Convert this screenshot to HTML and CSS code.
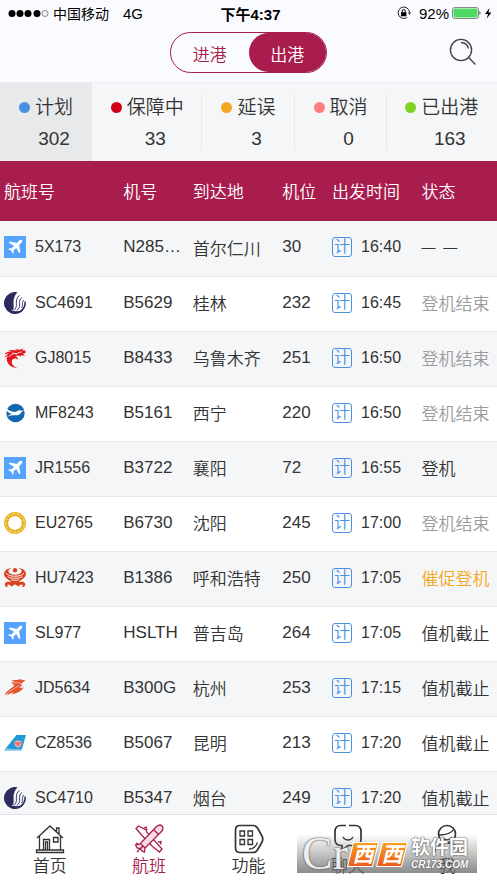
FILE: index.html
```html
<!DOCTYPE html>
<html lang="zh-CN">

<head>
  <meta charset="UTF-8">
  <meta name="viewport" content="width=device-width, initial-scale=1.0">
  <title>航班</title>
  <link rel="stylesheet" href="styles.css">
</head>

<body>
  <!-- shared icons -->
  <svg class="sprite" xmlns="http://www.w3.org/2000/svg">
    <symbol id="logo-plane" viewBox="0 0 22 22">
      <path fill="#55a3fb" d="M0 0h22v22H0z" />
      <path fill="#fff" d="M18 4c-1-.7-2.200 0-3 .8l-2.200 2.100L6 5.600 4.800 6.800l5.300 3L7.500 12.600l-2.300-.3-.9.900 3 1.500 1.500 3 .9-.9-.3-2.300 2.800-2.600 3 5.300 1.200-1.200-1.300-6.800 2.100-2.200C18 6.200 18.700 5 18 4z" />
    </symbol>
    <symbol id="logo-sc" viewBox="0 0 22 22">
      <path fill="#2d2a5e" d="M13.500.3A11 11 0 1 0 20.500 16.500C17.500 19.300 12.500 19.800 7 18.600c3.500-.8 2.600-4 2.500-7.600C9.400 7 10.500 3 13.500.3z" />
      <path fill="none" stroke="#2d2a5e" stroke-width=".9" d="M15.500 3.500c-5 3.500-2 9-3.700 12.500-.5 1.200-1.300 1.800-2.500 2.200M18 5.500c-4.300 3-1.300 7-3 10.500-.5 1-1.300 1.800-2.300 2.300M20 8c-2.800 2.500-.6 5-2.300 8" />
      <path fill="none" stroke="#2d2a5e" stroke-width="1.500" d="M21 9.500c.5 3.500-1 7.300-4.500 9.800" />
    </symbol>
    <symbol id="logo-gj" viewBox="0 0 22 22">
      <path fill="#e3141c" d="M21.500 3.500 18 3.200l1.300-2-3.300 1.600-5-.8 2.300 1.500C10 3 7 2.500 4 3.300l4.300.9C5 4.300 2 5 .5 7.200l4.500-1C3 7.300 1.300 8.700.5 11l3.800-2.900C2.700 10 2.500 12 3 14c1.200 4.500 6 6.800 11.500 7.400-4-1.400-6.800-3.500-6.800-6.500 0-2.500 2-3.400 3.500-3.400 1.300 0 2.200.5 2.800 1.400.2-2-1-3.400-3-3.900l4-.5 2 1 .5-1.500 3.500 1.200-2-2.700 2.500-.5z" />
      <path fill="none" stroke="#fff" stroke-width=".8" d="M5 10c2-3 5-4 9-3.500M8 6l5 1M14 5.500l4-.5" />
    </symbol>
    <symbol id="logo-mf" viewBox="0 0 22 22">
      <circle cx="11.500" cy="11" r="9.200" fill="#1167b1" />
      <path fill="#fff" d="M1 6c3 1.600 6 4 9.500 4 2 0 2.500-1.300 4.500-1.700 1.500-.3 2 .4 3.500.1l2.500.3c-2 .3-3.300.7-3.800 1.800-1.200 2.500-4 3-6.200 2.800-2.500-.2-5 .2-7.500 1.200 1.500-1.600 3-2.200 4.500-2.500C5 11.500 2.500 9 1 6z" />
    </symbol>
    <symbol id="logo-eu" viewBox="0 0 22 22">
      <circle cx="11" cy="11" r="9" fill="none" stroke="#e9b526" stroke-width="4" />
      <circle cx="11" cy="11" r="9.300" fill="none" stroke="#f8df87" stroke-width="1" stroke-dasharray="3 1.500" />
      <circle cx="11" cy="11" r="7.300" fill="none" stroke="#d79b17" stroke-width=".8" stroke-dasharray="2 2" />
    </symbol>
    <symbol id="logo-hu" viewBox="0 0 22 22">
      <path fill="#d9401f" d="M7.500 1C3 1.600 0 4 0 7c0 3.600 5 5.600 7.500 8.300C6 14.700 1.500 14 .8 17c-.4 2.300 1.800 3.600 4 2.700-1.300-.1-2-.8-1.500-1.700.8-1.200 3.800-.2 4 1.800l3.700-2.500 3.700 2.500c.2-2 3.200-3 4-1.800.5.900-.2 1.600-1.500 1.700 2.200.9 4.400-.4 4-2.700-.7-3-5.200-2.300-6.700-1.700C17 12.600 22 10.600 22 7c0-3-3-5.400-7.500-6C17.300 2.300 18 3.800 17.500 5c-1.700 3.500-11.300 3.500-13 0C4 3.800 4.700 2.300 7.500 1z" />
      <circle cx="11" cy="3.200" r="2.200" fill="#d9401f" />
      <path fill="none" stroke="#fff" stroke-width=".9" d="M2 6c2 4.300 16 4.300 18 0M3.500 9.300c3 2.700 12 2.700 15 0M7 12.500c2 1.200 6 1.200 8 0" />
    </symbol>
    <symbol id="logo-jd" viewBox="0 0 22 22">
      <path fill="#e5532d" d="M21.500 3.500 16 2.300l-2.500.8-6-.2 3.500 1.800-4.500.2 4 1.700-3 .1 3 1.600C7.500 11.500 3 13.500.5 18.300L5.500 15l-3 3.500 7.500-3.700-2.500 2.700c5-1 10.500-3.500 12-7l-4.500.5 3.500-3-2-.5 2-2z" />
      <path fill="none" stroke="#fff" stroke-width=".5" d="M5 14.500 16 8M10 5.500l7 .5" />
    </symbol>
    <symbol id="logo-cz" viewBox="0 0 22 22">
      <path fill="#1a9bd7" d="M12.500 3H22l-4.500 15.500H0z" />
      <path fill="#fff" d="m0 18.500 2-2.200c6 1 11 .7 16 .5l-.5 1.700z" opacity=".4" />
      <path fill="#f0a9a5" d="M10 9.500c2-1.500 6-1.500 8 0l-1 4.500-3 2-3-2z" />
      <path fill="none" stroke="#d2444a" d="M11 10.500c2 1 4 1 6 0M12.500 13h3" />
    </symbol>
  </svg>

  <div class="app">
    <div class="status_bar">
      <div class="carrier">
        <svg width="41" height="9" viewBox="0 0 41 9">
          <circle cx="4" cy="4.500" r="3.500" />
          <circle cx="12" cy="4.500" r="3.500" />
          <circle cx="20" cy="4.500" r="3.500" />
          <circle cx="29" cy="4.500" r="3.500" />
          <circle cx="37" cy="4.500" r="3" fill="none" stroke="#555" stroke-width=".7" />
        </svg>
        <span class="carrier_name">中国移动</span>
        <span>4G</span>
      </div>
      <div class="clock">下午4:37</div>
      <div class="battery">
        <svg class="lock" width="14" height="14" viewBox="0 0 14 14">
          <path fill="none" stroke="#222" d="M12.500 6A5.700 5.700 0 1 0 10 11.500" />
          <path d="M11 6.500h3l-1.500 2.200zM4 6.300h5.400v3.900H4z" />
          <path fill="none" stroke="#000" d="M5.200 6.500V5a1.500 1.500 0 0 1 3 0v1.500" />
        </svg>
        <span>92%</span>
        <svg width="41" height="14" viewBox="0 0 41 14">
          <rect x=".5" y="1.500" width="26" height="11" rx="2" fill="#fff" stroke="#888" />
          <rect x="1.500" y="2.500" width="24" height="9" rx="1" fill="#4cd964" />
          <path fill="#333" d="M27.500 5q2 2 0 4z" />
          <path d="m37.500 2-4.500 6h3l-1.300 4.500L39.500 6.500h-3z" />
        </svg>
      </div>
    </div>

    <header class="top_bar">
      <div class="segment">
        <button type="button">进港</button>
        <button type="button" class="active">出港</button>
      </div>
      <button type="button" class="search" aria-label="搜索">
        <svg width="28" height="28" viewBox="0 0 28 28" fill="none" stroke="#444" stroke-width="1.400">
          <circle cx="12" cy="12" r="10.600" />
          <path d="m19.600 19.600 6.800 6.800M12 4.500c4 .2 6.800 2.800 7.300 6" />
        </svg>
      </button>
    </header>

    <div class="stats">
      <button type="button" class="stat active"><i class="dot blue"></i><span>计划</span><span class="num">302</span></button>
      <button type="button" class="stat"><i class="dot red"></i><span>保障中</span><span class="num">33</span></button>
      <button type="button" class="stat"><i class="dot orange"></i><span>延误</span><span class="num">3</span></button>
      <button type="button" class="stat"><i class="dot pink"></i><span>取消</span><span class="num">0</span></button>
      <button type="button" class="stat"><i class="dot green"></i><span>已出港</span><span class="num">163</span></button>
    </div>

    <main class="flight_list">
      <table>
        <colgroup>
          <col class="col_flight">
          <col class="col_reg">
          <col class="col_dest">
          <col class="col_stand">
          <col class="col_time">
          <col class="col_state">
        </colgroup>
        <thead>
          <tr>
            <th>航班号</th>
            <th>机号</th>
            <th>到达地</th>
            <th>机位</th>
            <th>出发时间</th>
            <th>状态</th>
          </tr>
        </thead>
        <tbody>
          <tr>
            <td><div class="cell"><svg class="logo"><use href="#logo-plane" /></svg>5X173</div></td>
            <td>N285…</td>
            <td>首尔仁川</td>
            <td>30</td>
            <td><div class="cell"><span class="plan">计</span>16:40</div></td>
            <td><span class="dash">—&nbsp; —</span></td>
          </tr>
          <tr>
            <td><div class="cell"><svg class="logo"><use href="#logo-sc" /></svg>SC4691</div></td>
            <td>B5629</td>
            <td>桂林</td>
            <td>232</td>
            <td><div class="cell"><span class="plan">计</span>16:45</div></td>
            <td class="done">登机结束</td>
          </tr>
          <tr>
            <td><div class="cell"><svg class="logo"><use href="#logo-gj" /></svg>GJ8015</div></td>
            <td>B8433</td>
            <td>乌鲁木齐</td>
            <td>251</td>
            <td><div class="cell"><span class="plan">计</span>16:50</div></td>
            <td class="done">登机结束</td>
          </tr>
          <tr>
            <td><div class="cell"><svg class="logo"><use href="#logo-mf" /></svg>MF8243</div></td>
            <td>B5161</td>
            <td>西宁</td>
            <td>220</td>
            <td><div class="cell"><span class="plan">计</span>16:50</div></td>
            <td class="done">登机结束</td>
          </tr>
          <tr>
            <td><div class="cell"><svg class="logo"><use href="#logo-plane" /></svg>JR1556</div></td>
            <td>B3722</td>
            <td>襄阳</td>
            <td>72</td>
            <td><div class="cell"><span class="plan">计</span>16:55</div></td>
            <td>登机</td>
          </tr>
          <tr>
            <td><div class="cell"><svg class="logo"><use href="#logo-eu" /></svg>EU2765</div></td>
            <td>B6730</td>
            <td>沈阳</td>
            <td>245</td>
            <td><div class="cell"><span class="plan">计</span>17:00</div></td>
            <td class="done">登机结束</td>
          </tr>
          <tr>
            <td><div class="cell"><svg class="logo"><use href="#logo-hu" /></svg>HU7423</div></td>
            <td>B1386</td>
            <td>呼和浩特</td>
            <td>250</td>
            <td><div class="cell"><span class="plan">计</span>17:05</div></td>
            <td class="urgent">催促登机</td>
          </tr>
          <tr>
            <td><div class="cell"><svg class="logo"><use href="#logo-plane" /></svg>SL977</div></td>
            <td>HSLTH</td>
            <td>普吉岛</td>
            <td>264</td>
            <td><div class="cell"><span class="plan">计</span>17:05</div></td>
            <td>值机截止</td>
          </tr>
          <tr>
            <td><div class="cell"><svg class="logo"><use href="#logo-jd" /></svg>JD5634</div></td>
            <td>B300G</td>
            <td>杭州</td>
            <td>253</td>
            <td><div class="cell"><span class="plan">计</span>17:15</div></td>
            <td>值机截止</td>
          </tr>
          <tr>
            <td><div class="cell"><svg class="logo"><use href="#logo-cz" /></svg>CZ8536</div></td>
            <td>B5067</td>
            <td>昆明</td>
            <td>213</td>
            <td><div class="cell"><span class="plan">计</span>17:20</div></td>
            <td>值机截止</td>
          </tr>
          <tr>
            <td><div class="cell"><svg class="logo"><use href="#logo-sc" /></svg>SC4710</div></td>
            <td>B5347</td>
            <td>烟台</td>
            <td>249</td>
            <td><div class="cell"><span class="plan">计</span>17:20</div></td>
            <td>值机截止</td>
          </tr>
        </tbody>
      </table>
    </main>

    <nav class="tab_bar">
      <a href="#home">
        <svg viewBox="0 0 30 30">
          <path d="M2 14 15 2l13 12M4.500 12v14M25.500 12v14M1.500 26h27v2.500h-27zM8.500 26V15.500h6V26M10.500 26v-8h2v8M18.500 13.500h4.500v4.500h-4.500zM21.500 7.500V4h2.500v6" />
        </svg>
        首页
      </a>
      <a href="#flights" class="active">
        <svg viewBox="0 0 30 30">
          <path fill="#fff" d="M2 4.500 4.500 2 12 6l1 2.500 15 16.500-2.500 3-7-5.500L8.500 12z" />
          <path d="m10 4 2-1 1 3M24 18l3-.5-.5 3" />
          <path fill="#f9dbe5" d="M21.500 3.500c2.500-2.500 5-3 6.500-1.500s1 4-1.500 6.500L11 24l-.5 4L8 27l-1.500-2.500L3 24l-1.500-3L6 20z" />
          <path d="m20 6 4.500 4.500M7 20l4 4M3 28l6-6M4 20l-2-1" />
        </svg>
        航班
      </a>
      <a href="#features">
        <svg viewBox="0 0 30 30">
          <path stroke-width="1.700" d="M6 1.500h13.500c2 0 3 1 4 2.500l4.500 8q1.500 3 0 6l-4.500 8c-1 1.500-2 2.500-4 2.500H6c-3 0-4.500-1.500-4.500-4.500V6c0-3 1.500-4.500 4.500-4.500z" />
          <path d="M6 7h4.500v5H6zM14 7h4.500v5H14zM6 15.500h4.500v5H6zM14 15.500h4.500v5H14zM15 25c5 0 7-2.500 8.500-6.500" />
        </svg>
        功能
      </a>
      <a href="#chat">
        <svg viewBox="0 0 30 30">
          <path stroke-width="1.700" d="M8 1.500h5M16 1.500h6c4 0 6 2 6 6v8c0 4-2 6-6 6h-7l-6 5v-5H8c-4 0-6-2-6-6v-8c0-4 2-6 6-6" />
          <path d="M10 13c2 4 8 4 10 0" />
        </svg>
        聊天
      </a>
      <a href="#me">
        <svg viewBox="0 0 30 30">
          <circle cx="15" cy="10" r="8.500" stroke-width="1.700" />
          <path d="M7 11c7 0 12-1 15-6M11 14c3 3 7 2 9-1M3 28c1-6 5-9 12-9s11 3 12 9" />
        </svg>
        我
      </a>
      <div class="watermark">
        <span class="mark_cr">Cr</span>
        <span class="mark_xi"><i>西</i><i>西</i></span>
        <span class="mark_site"><b>软件园</b><em>CR173.COM</em></span>
      </div>
    </nav>
  </div>
</body>

</html>
```
FILE: styles.css
```css
* {
  box-sizing: border-box;
}

body {
  margin: 0;
  background: #fff;
  color: #333;
  font-family: "Liberation Sans", "Noto Sans CJK SC", sans-serif;
  font-size: 17px;
  font-weight: 350;
}

button {
  margin: 0;
  padding: 0;
  border: 0;
  background: none;
  color: inherit;
  font: inherit;
  cursor: pointer;
}

.sprite {
  display: none;
}

.app {
  display: flex;
  flex-direction: column;
  height: 100vh;
  padding-bottom: 10px;
}

/* phone status bar */
.status_bar {
  display: grid;
  grid-template-columns: 1fr auto 1fr;
  align-items: center;
  height: 26px;
  padding: 0 4px 0 8px;
  background: #fafbfe;
  color: #000;
  font-size: 15px;
  font-weight: 400;
}

.carrier,
.battery {
  display: flex;
  align-items: center;
  gap: 4px;
}

.carrier_name {
  margin-right: 10px;
  font-size: 14px;
}

.clock {
  font-weight: bold;
}

.battery {
  justify-content: flex-end;
  gap: 3px;
}

.lock {
  margin-right: 5px;
}

/* top bar */
.top_bar {
  display: grid;
  grid-template-columns: 1fr 157px 1fr;
  align-items: center;
  height: 57px;
  padding: 0 20px 4px;
  border-bottom: 1px solid #eceef0;
  background: #fafbfe;
}

.segment {
  grid-column: 2;
  display: flex;
  height: 41px;
  border: 1px solid #a81d4e;
  border-radius: 21px;
}

.segment button {
  flex: 1;
  padding-top: 2px;
  border-radius: 20px;
  color: #a81d4e;
}

.segment button.active {
  background: #a81d4e;
  color: #fff;
}

.search {
  justify-self: end;
  height: 28px;
}

.search svg {
  display: block;
}

/* counters */
.stats {
  display: grid;
  grid-template-columns: 5fr 6fr 5fr 5fr 6fr;
  height: 78px;
  background: #f5f6f8;
}

.stat {
  display: grid;
  grid-template-columns: 12px auto;
  grid-template-rows: 31px 31px;
  column-gap: 4px;
  align-content: center;
  align-items: center;
  justify-content: center;
  padding-top: 1px;
  background: linear-gradient(#e6e8ea, #e6e8ea) right center / 1px 55px no-repeat;
  font-size: 19px;
  line-height: 31px;
}

.stat:last-child {
  background: none;
}

.stat.active {
  background: #e8e9eb;
}

.stat .num {
  grid-column: 2;
}

.dot {
  width: 11px;
  height: 11px;
  border-radius: 50%;
}

.dot.blue {
  background: #4a90e2;
}

.dot.red {
  background: #d0021b;
}

.dot.orange {
  background: #f5a623;
}

.dot.pink {
  background: #ff7e80;
}

.dot.green {
  background: #7ed321;
}

/* flights */
.flight_list {
  flex: 1;
  min-height: 0;
  overflow: hidden;
}

table {
  width: 100%;
  border-collapse: collapse;
  table-layout: fixed;
}

.col_flight {
  width: 24%;
}

.col_reg {
  width: 14%;
}

.col_dest,
.col_time {
  width: 18%;
}

.col_stand {
  width: 10%;
}

.col_state {
  width: 16%;
}

th,
td {
  padding: 0 0 2px 4px;
  text-align: left;
  white-space: nowrap;
}

th {
  height: 60px;
  background: #a81d4e;
  color: #fff;
  font-weight: 350;
}

td {
  height: 55px;
  border-bottom: 1px solid #e8e9eb;
}

tbody tr:nth-child(odd) {
  background: #f5f6f8;
}

.cell {
  display: flex;
  align-items: center;
  gap: 9px;
  font-size: 16px;
}

.logo {
  width: 22px;
  height: 22px;
}

.plan {
  width: 20px;
  height: 20px;
  border: 1px solid #4a90e2;
  border-radius: 3px;
  color: #4a90e2;
  line-height: 17px;
  text-align: center;
}

.done {
  color: #9b9b9b;
}

.urgent {
  color: #f5a623;
}

.dash {
  font-size: 14px;
}

/* bottom tabs */
.tab_bar {
  position: relative;
  display: flex;
  height: 59px;
  border-top: 1px solid #e1e4e7;
  background: #fff;
}

.tab_bar a {
  flex: 1;
  display: flex;
  flex-direction: column;
  align-items: center;
  padding-top: 9px;
  color: #333;
  line-height: 25px;
  text-decoration: none;
}

.tab_bar a.active {
  color: #a81d4e;
}

.tab_bar a svg {
  width: 30px;
  height: 30px;
  flex: none;
  fill: none;
  stroke: currentColor;
  stroke-width: 1.3;
}

.watermark {
  position: absolute;
  right: 20px;
  bottom: 0;
  display: flex;
  align-items: center;
  width: 180px;
  height: 39px;
  padding-left: 5px;
  background: linear-gradient(rgba(120, 120, 120, 0), rgba(110, 110, 110, .8));
  white-space: nowrap;
}

.mark_cr {
  width: 48px;
  color: #eee;
  font-family: "Liberation Serif", serif;
  font-size: 46px;
  line-height: 39px;
  text-shadow: 0 0 2px #555, 0 0 1px #555;
}

.mark_xi {
  display: flex;
  gap: 3px;
  width: 61px;
  padding-top: 2px;
}

/* slanted orange tile behind each character */
.mark_xi i {
  position: relative;
  z-index: 0;
  width: 26px;
  color: #fff;
  font-size: 21px;
  font-weight: bold;
  line-height: 25px;
  text-align: center;
}

.mark_xi i::before {
  content: "";
  position: absolute;
  z-index: -1;
  inset: 0;
  border: 1px solid #fff;
  background: linear-gradient(#f9a01b, #ec5a1c);
  transform: skewX(-14deg);
}

.mark_site {
  display: flex;
  flex-direction: column;
  color: #fff;
  text-shadow: 0 0 2px #555, 0 0 1px #555;
}

.mark_site b {
  font-size: 19px;
  line-height: 22px;
}

.mark_site em {
  font-size: 10px;
  font-weight: bold;
  line-height: 12px;
}
```
